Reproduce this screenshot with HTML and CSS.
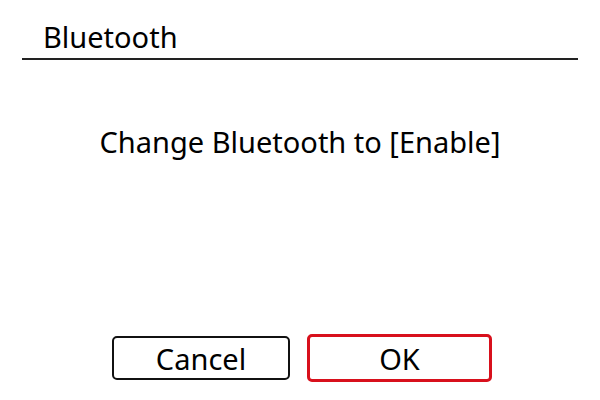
FILE: index.html
```html
<!DOCTYPE html>
<html>
<head>
  <title>Bluetooth</title>
  <link rel="stylesheet" href="styles.css">
</head>
<body>
  <div class="screen">
    <div class="header">
      <h1 class="title">Bluetooth</h1>
    </div>
    <p class="message">Change Bluetooth to [Enable]</p>
    <div class="buttons">
      <button class="btn btn-cancel">Cancel</button>
      <button class="btn btn-ok">OK</button>
    </div>
  </div>
</body>
</html>
```

FILE: styles.css
```css
body {
  margin: 0;
  background: #fff;
  font-family: "Noto Sans", "Open Sans", sans-serif;
  color: #000;
}
.screen {
  display: flex;
  flex-direction: column;
  height: 400px;
  box-sizing: border-box;
  padding-bottom: 18px;
}
.header {
  margin: 0 22px;
  padding: 22px 0 7px 21px;
  border-bottom: 2px solid #222;
}
.title {
  margin: 0;
  font-size: 29px;
  font-weight: normal;
  line-height: 29px;
}
.message {
  margin: 67px 0 0;
  font-size: 29px;
  line-height: 29px;
  text-align: center;
}
.buttons {
  margin-top: auto;
  display: flex;
  justify-content: center;
  align-items: center;
  gap: 17px;
  padding-left: 4px;
}
.btn {
  font-family: inherit;
  font-size: 29px;
  line-height: 29px;
  color: #000;
  background: #fff;
  box-sizing: border-box;
  padding: 0;
  border-radius: 5px;
}
.btn-cancel {
  width: 178px;
  height: 44px;
  border: 2px solid #111;
}
.btn-ok {
  width: 185px;
  height: 48px;
  border: 3px solid #d8101c;
}
```
